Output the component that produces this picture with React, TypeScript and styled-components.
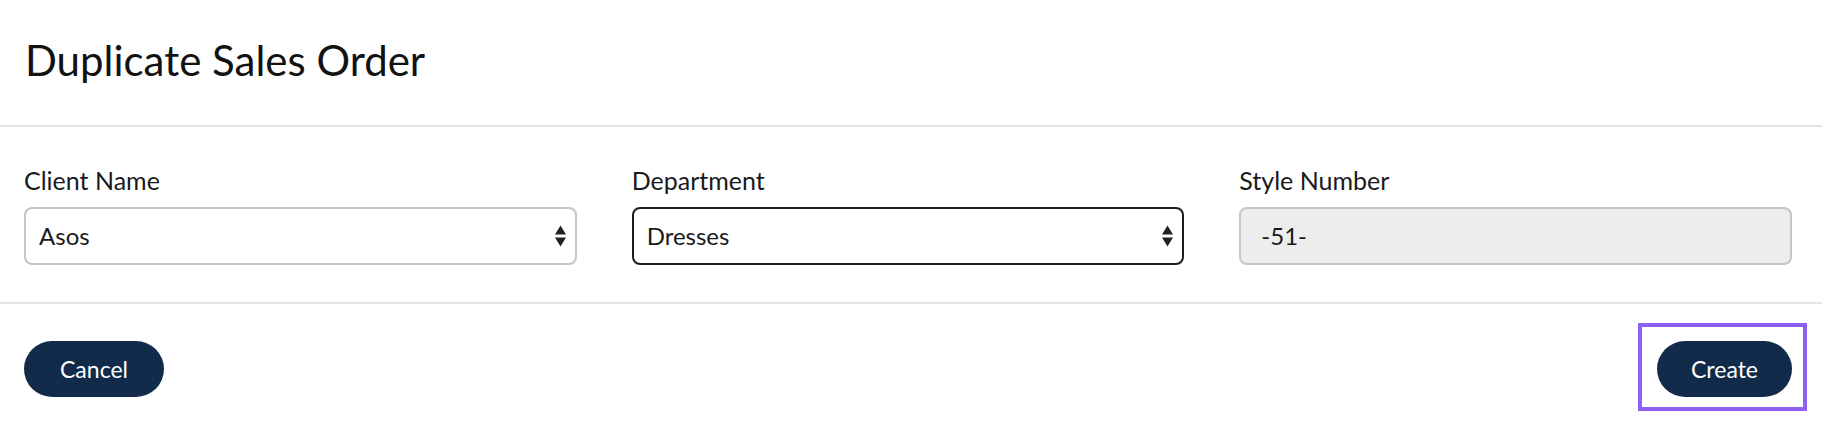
import React from "react";
import styled, { createGlobalStyle } from "styled-components";

const Global = createGlobalStyle`
  html, body { margin: 0; padding: 0; background: #ffffff; }
  body { font-family: Lato, "Open Sans", sans-serif; color: #161616; }
  * { box-sizing: border-box; }
`;

const Dialog = styled.div`
  width: 1822px;
  background: #fff;
`;

const Header = styled.header`
  height: 127px;
  padding: 0 25px;
  display: flex;
  align-items: center;
  border-bottom: 2px solid #e4e4e4;
`;

const Title = styled.h1`
  margin: 0;
  font-size: 42px;
  font-weight: 400;
  color: #121212;
  transform: translateY(-3px);
`;

const Body = styled.div`
  display: grid;
  grid-template-columns: repeat(3, 1fr);
  column-gap: 55px;
  padding: 38px 30px 37px 24px;
  border-bottom: 2px solid #e4e4e4;
`;

const Field = styled.div`
  display: flex;
  flex-direction: column;
  gap: 12px;
`;

const Label = styled.label`
  font-size: 25px;
  line-height: 30px;
  color: #1a1a1a;
`;

const Box = styled.div<{ $focused?: boolean; $disabled?: boolean }>`
  height: 58px;
  border-radius: 8px;
  border: 2px solid ${(p) => (p.$focused ? "#1c1c1c" : "#c3c7cb")};
  background: ${(p) => (p.$disabled ? "#ededed" : "#fff")};
  display: flex;
  align-items: center;
  justify-content: space-between;
  padding: 0 9px 0 ${(p) => (p.$disabled ? "20px" : "13px")};
  font-size: 24px;
  color: #1a1a1a;
`;

const Value = styled.span`
  line-height: 1;
`;

const Arrows = styled.svg`
  width: 11px;
  height: 24px;
  display: block;
`;

const Footer = styled.footer`
  display: flex;
  justify-content: space-between;
  align-items: center;
  padding: 37px 30px 30px 24px;
`;

const Button = styled.button<{ $wide?: boolean }>`
  height: 56px;
  border: none;
  border-radius: 28px;
  background: #132b4a;
  color: #fff;
  font-family: inherit;
  font-size: 23px;
  padding: 0 ${(p) => (p.$wide ? "36px" : "34px")};
  cursor: pointer;
`;

const Highlight = styled.div`
  position: relative;
  display: flex;
`;

const HighlightFrame = styled.span`
  position: absolute;
  top: -18px;
  left: -19px;
  right: -15px;
  bottom: -14px;
  border: 4px solid #8d5ff5;
  pointer-events: none;
`;

const SelectArrows = () => (
  <Arrows viewBox="0 0 11 24">
    <path d="M5.5 1.5 L11 10.5 H0 Z" fill="#222" />
    <path d="M5.5 22.5 L11 13.5 H0 Z" fill="#222" />
  </Arrows>
);

export default function App() {
  return (
    <Dialog>
      <Global />
      <Header>
        <Title>Duplicate Sales Order</Title>
      </Header>
      <Body>
        <Field>
          <Label>Client Name</Label>
          <Box>
            <Value>Asos</Value>
            <SelectArrows />
          </Box>
        </Field>
        <Field>
          <Label>Department</Label>
          <Box $focused>
            <Value>Dresses</Value>
            <SelectArrows />
          </Box>
        </Field>
        <Field>
          <Label>Style Number</Label>
          <Box $disabled>
            <Value>-51-</Value>
          </Box>
        </Field>
      </Body>
      <Footer>
        <Button $wide>Cancel</Button>
        <Highlight>
          <Button>Create</Button>
          <HighlightFrame />
        </Highlight>
      </Footer>
    </Dialog>
  );
}
